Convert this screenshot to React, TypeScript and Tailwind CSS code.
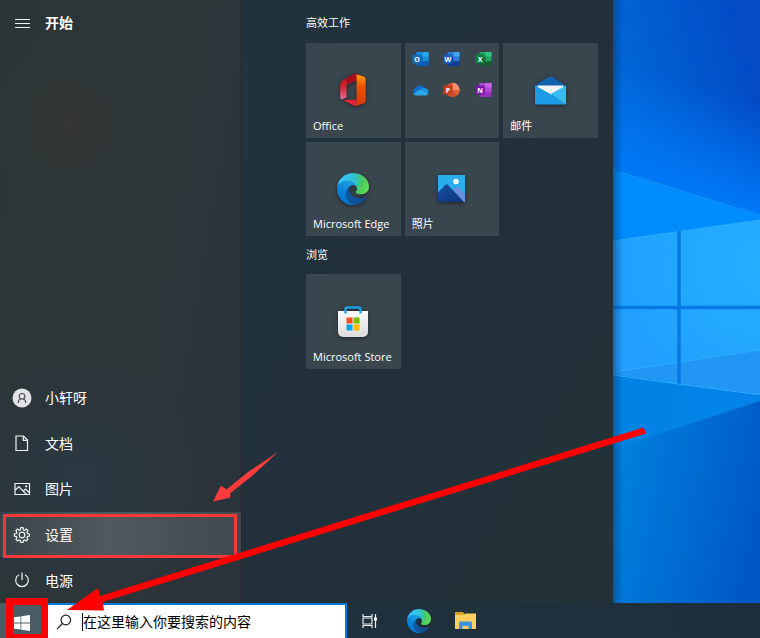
import type { ReactNode } from "react";

const smallApps = [
  { name: "Outlook", letter: "O", dark: "#0a5fb5", badge: "#0f6cbd", light: "#28a8ea", mid: "#1490df" },
  { name: "Word", letter: "W", dark: "#103f91", badge: "#185abd", light: "#41a5ee", mid: "#2b7cd3" },
  { name: "Excel", letter: "X", dark: "#185c37", badge: "#107c41", light: "#33c481", mid: "#21a366" },
  { name: "OneDrive" },
  { name: "PowerPoint", letter: "P" },
  { name: "OneNote", letter: "N", dark: "#9332bf", badge: "#7719aa", light: "#ca64ea", mid: "#ae4bd5" },
];

const EdgeIcon = ({ id, className }: { id: string; className: string }) => (
  <svg viewBox="0 0 256 256" className={className} aria-hidden="true">
    <defs>
      <linearGradient id={`${id}-a`} x1="60" y1="180" x2="241" y2="180" gradientUnits="userSpaceOnUse">
        <stop offset="0" stopColor="#0c59a4" />
        <stop offset="1" stopColor="#114a8b" />
      </linearGradient>
      <linearGradient id={`${id}-b`} x1="150" y1="100" x2="46" y2="226" gradientUnits="userSpaceOnUse">
        <stop offset="0" stopColor="#1b9de2" />
        <stop offset="0.3" stopColor="#1595df" />
        <stop offset="0.7" stopColor="#0680d7" />
        <stop offset="1" stopColor="#0078d4" />
      </linearGradient>
      <radialGradient id={`${id}-c`} cx="30" cy="50" r="230" gradientUnits="userSpaceOnUse">
        <stop offset="0" stopColor="#35c1f1" />
        <stop offset="0.3" stopColor="#34c1ed" />
        <stop offset="0.55" stopColor="#2fc2c0" />
        <stop offset="0.8" stopColor="#4bcb5a" />
        <stop offset="1" stopColor="#5fdc5c" />
      </radialGradient>
    </defs>
    <g transform="translate(-4.63 -4.92)">
      <path
        fill={`url(#${id}-a)`}
        d="M235.68 195.46a93.73 93.73 0 0 1-10.54 4.71 101.87 101.87 0 0 1-35.9 6.46c-47.32 0-88.54-32.55-88.54-74.32A31.48 31.48 0 0 1 117.13 105c-42.8 1.8-53.8 46.4-53.8 72.53 0 73.88 68.09 81.37 82.76 81.37 7.91 0 19.84-2.3 27-4.56l1.31-.44a128.34 128.34 0 0 0 66.6-52.8 4 4 0 0 0-5.32-5.64z"
      />
      <path
        fill={`url(#${id}-b)`}
        d="M110.34 246.34A79.2 79.2 0 0 1 87.6 225a80.72 80.72 0 0 1 29.53-120c3.12-1.47 8.45-4.13 15.54-4a32.35 32.35 0 0 1 25.69 13 31.88 31.88 0 0 1 6.36 18.66c0-.21 24.46-79.6-80-79.6-43.9 0-80 41.66-80 78.21a130.15 130.15 0 0 0 12.11 56 128 128 0 0 0 156.38 67.11 75.55 75.55 0 0 1-62.78-8z"
      />
      <path
        fill={`url(#${id}-c)`}
        d="M156.94 153.78c-.81 1.05-3.3 2.5-3.3 5.66 0 2.61 1.7 5.12 4.72 7.23 14.38 10 41.49 8.68 41.56 8.68a59.56 59.56 0 0 0 30.27-8.35 61.38 61.38 0 0 0 30.43-52.88c.26-22.41-8-37.31-11.34-43.91C228.09 28.76 182.35 4.93 132.61 4.93a128 128 0 0 0-128 126.2c.48-36.54 36.8-66.05 80-66.05 3.5 0 23.46.34 42 10.07 16.34 8.58 24.9 18.94 30.85 29.21 6.18 10.67 7.28 24.15 7.28 29.52s-2.74 13.33-7.8 19.9z"
      />
    </g>
  </svg>
);

const OfficeIcon = () => (
  <svg viewBox="0 0 28 34" className="h-[34px] w-7" aria-hidden="true">
    <defs>
      <linearGradient id="office-left" x1="0" y1="0" x2="0" y2="1">
        <stop offset="0" stopColor="#b3101d" />
        <stop offset="0.5" stopColor="#d0252f" />
        <stop offset="1" stopColor="#e36a9c" />
      </linearGradient>
      <linearGradient id="office-right" x1="0" y1="0" x2="0" y2="1">
        <stop offset="0" stopColor="#ff9d0a" />
        <stop offset="0.4" stopColor="#e8500a" />
        <stop offset="1" stopColor="#d83b01" />
      </linearGradient>
    </defs>
    <path d="M15 1 3.500 7.400C2 8.300 1.200 9.800 1.200 11.500v12.700c0 2 1.500 2.500 2.800 1.800l3.600-1.700V13.200c0-1.200.7-2.100 1.700-2.500L18 7V1.500C17 .8 16 .6 15 1z" fill="url(#office-left)" />
    <path d="M15 1 6 6l2.500 5L18 7l6-4-6.500-1.700C16.500.8 15.800.7 15 1z" fill="#a50e1a" />
    <path d="m17.500 1.300 7 2.100c1.400.4 2.200 1.400 2.200 2.800v21.600c0 1.400-.8 2.400-2.200 2.800l-7 2.200z" fill="url(#office-right)" />
    <path d="M6.200 26.800h11.300v6c-1 .3-2 .2-2.900-.3l-8.800-4.500c-.7-.4-.3-1.200.4-1.200z" fill="#e3223a" />
  </svg>
);

const MailIcon = () => (
  <svg viewBox="0 0 31 29" className="h-[29px] w-[31px]" aria-hidden="true">
    <path d="M0 9.500 14.300.6a2.500 2.500 0 0 1 2.400 0L31 9.500v7H0z" fill="#0f62ad" />
    <path d="M2.500 9.500h26v3L15.500 20 2.500 12.500z" fill="#f3f3f3" />
    <path d="M0 9.500 15.500 18 31 28.500H0z" fill="#1c9be6" />
    <path d="M31 9.500v19L15.500 18z" fill="#33bdf2" />
  </svg>
);

const PhotosIcon = () => (
  <svg viewBox="0 0 27 27" className="size-[27px]" aria-hidden="true">
    <defs>
      <linearGradient id="photo-hill" x1="0" y1="0" x2="1" y2="1">
        <stop offset="0" stopColor="#174f9f" />
        <stop offset="1" stopColor="#0b3578" />
      </linearGradient>
    </defs>
    <path d="M0 0h27v27H0z" fill="#28aeea" />
    <path d="m15 15 2.500-2.500a2 2 0 0 1 2.800 0L27 19v8h-4z" fill="#6e8ee0" />
    <path d="M0 17.500 7.200 10a2 2 0 0 1 2.800 0l16 17H0z" fill="url(#photo-hill)" />
    <circle cx="18" cy="6.500" r="2.700" fill="#fff" />
  </svg>
);

const StoreIcon = () => (
  <svg viewBox="0 0 30 32" className="h-8 w-[30px]" aria-hidden="true">
    <defs>
      <linearGradient id="store-bag" x1="0" y1="0" x2="0" y2="1">
        <stop offset="0" stopColor="#fbfbfb" />
        <stop offset="1" stopColor="#dcdcdc" />
      </linearGradient>
    </defs>
    <path d="M0 5h30v21a5 5 0 0 1-5 5H5a5 5 0 0 1-5-5z" fill="url(#store-bag)" />
    <path d="M7.500 7.500V3.200c0-1 .7-1.700 1.700-1.700h11.600c1 0 1.700.7 1.700 1.700v4.300" fill="none" stroke="#1b9fe8" strokeWidth="2.400" />
    <path d="M8.500 11.500h6v6h-6z" fill="#f25022" />
    <path d="M15.500 11.500h6v6h-6z" fill="#7fba00" />
    <path d="M8.500 18.500h6v6h-6z" fill="#00a4ef" />
    <path d="M15.500 18.500h6v6h-6z" fill="#ffb900" />
  </svg>
);

const SmallAppIcon = ({ app }: { app: typeof smallApps[0] }) => {
  if (app.name === "OneDrive") {
    return (
      <svg viewBox="0 0 17 16" className="h-4 w-[17px]" aria-label={app.name}>
        <path d="M3.800 6.300a5 5 0 0 1 9-.3L9 10l-6 2.500a3.200 3.200 0 0 1 .8-6.200z" fill="#0f6cc4" />
        <path d="M8 7.500a5 5 0 0 1 5-1.500 3.700 3.700 0 0 1 3.500 4.500L12 12z" fill="#1a8fe0" />
        <path d="M1.500 11.800 8 7.500l8 3.800a2.300 2.300 0 0 1-2 2.200H4a3.200 3.200 0 0 1-2.500-1.700z" fill="#28a8ea" />
      </svg>
    );
  }
  return (
    <svg viewBox="0 0 17 16" className="h-4 w-[17px]" aria-label={app.name}>
      {app.name === "PowerPoint" ? (
        <>
          <circle cx="9.500" cy="8" r="7.200" fill="#d35230" />
          <path d="M9.500.8A7.200 7.200 0 0 1 16.700 8H9.500z" fill="#ff8f6b" />
          <path d="M9.500 8h7.200a7.200 7.200 0 0 1-2 5z" fill="#e0603e" />
        </>
      ) : (
        <>
          <path d="M4.500 1h12v14h-12z" fill={app.dark} />
          <path d="M4.500 1h12v4.700h-12z" fill={app.mid} />
          <path d="M10.500 1h6v4.700h-6z" fill={app.light} />
          <path d="M10.500 5.700h6v4.600h-6z" fill={app.mid} />
        </>
      )}
      <rect x="0.500" y="3.500" width="9" height="9" rx="0.800" fill={app.badge ?? "#c43e1c"} />
      <text x="5" y="10.500" textAnchor="middle" fill="#fff" className="font-['Open_Sans',sans-serif] text-[7px] font-bold">
        {app.letter}
      </text>
    </svg>
  );
};

const Stroke = ({ children }: { children: ReactNode }) => (
  <svg viewBox="0 0 20 20" className="size-5 shrink-0" fill="none" stroke="#f1f3f3" strokeWidth="1.200" aria-hidden="true">
    {children}
  </svg>
);

const navItems = [
  {
    name: "小轩呀",
    icon: (
      <Stroke>
        <circle cx="10" cy="10" r="9.500" fill="#e2e3e4" stroke="none" />
        <g stroke="#50565a">
          <circle cx="10" cy="8.300" r="2.800" />
          <path d="M6.300 15c0-2.400 1.200-3.800 2.400-4.200M13.700 15c0-2.400-1.200-3.800-2.400-4.200" />
        </g>
      </Stroke>
    ),
  },
  {
    name: "文档",
    icon: (
      <Stroke>
        <path d="M4 3h7.500l4 4v10.500H4zM11.300 3v4.300h4.200" />
      </Stroke>
    ),
  },
  {
    name: "图片",
    icon: (
      <Stroke>
        <path d="M3 4.500h14.500v11H3zM3 11.500l3.800-3.800 7.700 7.800M11.500 12l2-2 4 4" />
        <circle cx="14.200" cy="7.300" r="0.500" />
      </Stroke>
    ),
  },
  {
    name: "设置",
    active: true,
    icon: (
      <Stroke>
        <path d="m8.800 2.700-.5 2-1.100.5-1.800-1.100-1.500 1.500 1 1.800-.5 1.100-2 .5v2.100l2 .5.500 1.100-1 1.800 1.500 1.500 1.800-1.100 1.100.5.500 2h2.200l.5-2 1.100-.5 1.800 1.100 1.500-1.500-1-1.800.5-1.100 2-.5V9l-2-.5-.5-1.100 1-1.800-1.500-1.500-1.800 1.100-1.100-.5-.5-2z" />
        <circle cx="10" cy="10" r="2.800" />
      </Stroke>
    ),
  },
  {
    name: "电源",
    icon: (
      <Stroke>
        <path d="M10 2.500V10M7 4.700a6.300 6.300 0 1 0 6 0" />
      </Stroke>
    ),
  },
];

const Tile = ({ label, children }: { label: string; children: ReactNode }) => (
  <button className="relative flex aspect-square items-center justify-center bg-[#3a464e] text-white">
    <span className="drop-shadow-[0_1px_2px_rgba(0,0,0,0.5)]">{children}</span>
    <span className="absolute bottom-1 left-[7px] text-[11px] leading-4 whitespace-nowrap">{label}</span>
  </button>
);

const Wallpaper = () => (
  <svg viewBox="0 0 147 603" preserveAspectRatio="xMinYMin slice" className="absolute inset-0 size-full" aria-hidden="true">
    <defs>
      <linearGradient id="sky" x1="0" y1="150" x2="147" y2="110" gradientUnits="userSpaceOnUse">
        <stop offset="0" stopColor="#006cd9" />
        <stop offset="1" stopColor="#034cc6" />
      </linearGradient>
      <linearGradient id="glow" x1="30" y1="190" x2="62" y2="80" gradientUnits="userSpaceOnUse">
        <stop offset="0" stopColor="#007bfb" />
        <stop offset="1" stopColor="#007bfb" stopOpacity="0" />
      </linearGradient>
      <linearGradient id="beam" x1="0" y1="0" x2="1" y2="0">
        <stop offset="0" stopColor="#0083e2" />
        <stop offset="1" stopColor="#0484ec" />
      </linearGradient>
      <linearGradient id="ground" x1="0" y1="500" x2="147" y2="530" gradientUnits="userSpaceOnUse">
        <stop offset="0" stopColor="#007fdc" />
        <stop offset="1" stopColor="#0057c7" />
      </linearGradient>
      <radialGradient id="pane" cx="147" cy="265" r="150" gradientUnits="userSpaceOnUse">
        <stop offset="0" stopColor="#24b0ff" />
        <stop offset="1" stopColor="#219fff" />
      </radialGradient>
      <linearGradient id="shade" x1="0" y1="0" x2="1" y2="0">
        <stop offset="0" stopColor="#00305f" stopOpacity="0.450" />
        <stop offset="1" stopColor="#00305f" stopOpacity="0" />
      </linearGradient>
    </defs>
    <path d="M0 0h147v300H0z" fill="url(#sky)" />
    <path d="M0 0h147v300H0z" fill="url(#glow)" />
    <path d="M0 300h147v303H0z" fill="url(#ground)" />
    <path d="m0 170 147 45v10L0 245z" fill="#008bff" />
    <path d="m0 170 147 45" stroke="#1493f5" />
    <path d="m0 374 147 22v5L40 436 0 448z" fill="url(#beam)" />
    <path d="m0 241 147-21v175L0 374z" fill="url(#pane)" />
    <path d="m0 372 147-22v45L0 374z" fill="#2196f5" />
    <path d="m0 241 147-21M0 372l147-22M0 375l147 20" stroke="#2bb0ff" />
    <path d="M66 231v153M0 307.500h147" stroke="#0879e3" strokeWidth="3.500" />
    <path d="M0 0h10v603H0z" fill="url(#shade)" />
  </svg>
);

const App = () => {
  return (
    <div className="relative flex h-screen flex-col overflow-hidden bg-[#22313a] font-['Open_Sans','Noto_Sans_CJK_SC',sans-serif] text-white">
      <main className="flex min-h-0 flex-1">
        <nav className="flex w-[242px] shrink-0 flex-col justify-between border-r border-[#25292e] bg-[radial-gradient(circle_at_70px_125px,#343733,transparent_80px),radial-gradient(circle_at_80px_480px,#2a3943,transparent_120px),linear-gradient(100deg,#2b3537,#2d3539_60%,#2b333b)]">
          <button className="flex h-[45px] items-center gap-[13px] pl-3 text-[14px] font-bold">
            <Stroke>
              <path d="M3 6.500h15M3 10.500h15M3 14.500h15" />
            </Stroke>
            开始
          </button>
          <ul className="flex h-[228px] flex-col">
            {navItems.map((item) => (
              <li key={item.name} className="flex-1">
                <button
                  className={`flex size-full items-center gap-[13px] pl-3 text-[14px] ${item.active ? "bg-[linear-gradient(90deg,#3b4549,#50595e_45%,#40494e)]" : ""
                    }`}
                >
                  {item.icon}
                  {item.name}
                </button>
              </li>
            ))}
          </ul>
        </nav>

        <section className="w-[371px] shrink-0 bg-[linear-gradient(120deg,#20333d,#22303b_50%,#243238)] pl-16 text-[11px]">
          <h2 className="flex h-[43px] items-center pt-1">高效工作</h2>
          <div className="grid w-[292px] grid-cols-3 gap-1">
            <Tile label="Office">
              <OfficeIcon />
            </Tile>
            <button className="grid grid-cols-3 content-start justify-items-center gap-y-[15px] bg-[#3a464e] pt-2">
              {smallApps.map((app) => (
                <SmallAppIcon key={app.name} app={app} />
              ))}
            </button>
            <Tile label="邮件">
              <MailIcon />
            </Tile>
            <Tile label="Microsoft Edge">
              <EdgeIcon id="edge-tile" className="size-8" />
            </Tile>
            <Tile label="照片">
              <PhotosIcon />
            </Tile>
          </div>
          <h2 className="flex h-[38px] items-center">浏览</h2>
          <div className="grid w-[292px] grid-cols-3 gap-1">
            <Tile label="Microsoft Store">
              <StoreIcon />
            </Tile>
          </div>
        </section>

        <div className="relative flex-1">
          <Wallpaper />
        </div>
      </main>

      <footer className="flex h-[35px] shrink-0 bg-[linear-gradient(90deg,#20343e,#1f2e3c)]">
        <button aria-label="开始" className="flex w-12 items-center justify-center bg-[#4a5d66] pt-1 pr-1">
          <svg viewBox="0 0 16 16" className="size-4" fill="#fff" aria-hidden="true">
            <path d="M0 2.300 6.500 1.400v6.200H0zM7.300 1.300 16 0v7.600H7.300zM0 8.400h6.500v6.200L0 13.700zM7.300 8.400H16V16l-8.700-1.300z" />
          </svg>
        </button>
        <label className="flex w-[299px] items-center border-t-2 border-r-2 border-[#0078d7] bg-white pl-2 text-black">
          <svg viewBox="0 0 16 16" className="size-4 shrink-0" fill="none" stroke="#222" strokeWidth="1.200" aria-hidden="true">
            <circle cx="9.800" cy="6" r="4.800" />
            <path d="M6.400 9.500 1 15.200" />
          </svg>
          <span className="ml-[10px] h-[18px] w-px bg-black" />
          <input
            type="text"
            aria-label="搜索"
            placeholder="在这里输入你要搜索的内容"
            className="min-w-0 flex-1 text-[14px] outline-none placeholder:text-black"
          />
        </label>
        <div className="flex items-center pl-[14px]">
          <button aria-label="任务视图" className="flex w-[18px] justify-center">
            <svg viewBox="0 0 18 16" className="h-4 w-[18px]" fill="none" stroke="#e8ecee" strokeWidth="1.200" aria-hidden="true">
              <path d="M2 1v2.500h9V1M2 15v-2.500h9V15M2 5h9v6H2zM14.500 1v14" />
              <path d="M13 4.500h3v3h-3z" fill="#fff" stroke="none" />
            </svg>
          </button>
          <button aria-label="Microsoft Edge" className="ml-7">
            <EdgeIcon id="edge-bar" className="size-6" />
          </button>
          <button aria-label="文件资源管理器" className="ml-6">
            <svg viewBox="0 0 21 18" className="h-[18px] w-[21px]" aria-hidden="true">
              <path d="M0 0h8l1.500 2H21v15H0z" fill="#e0a01f" />
              <path d="M0 3h9l1.500-1.500H21V17H0z" fill="#fccf60" />
              <path d="M4 17v-6a1.500 1.500 0 0 1 1.500-1.500h10A1.500 1.500 0 0 1 17 11v6h-3.500v-3h-6v3z" fill="#3f93dc" />
            </svg>
          </button>
        </div>
      </footer>

      {/* Step markers drawn over the desktop */}
      <svg viewBox="0 0 760 638" className="pointer-events-none absolute bottom-0 left-0 h-[638px] w-[760px]" aria-hidden="true">
        <rect x="4.500" y="515.500" width="231" height="41" fill="none" stroke="#f5383c" strokeWidth="3" />
        <path d="m213 501.500 8-16 5.500 4L248 472l30-20-26 24-22 17.500.5 4z" fill="#fb3b3c" />
        <rect x="9.500" y="601.500" width="35" height="36" fill="none" stroke="#fb0000" strokeWidth="7" />
        <path d="m67 610 31-22 2 8 543.500-168.500 2.500 6L102.500 602l1.500 8.500z" fill="#ff0000" />
      </svg>
    </div>
  );
};

export default App;
